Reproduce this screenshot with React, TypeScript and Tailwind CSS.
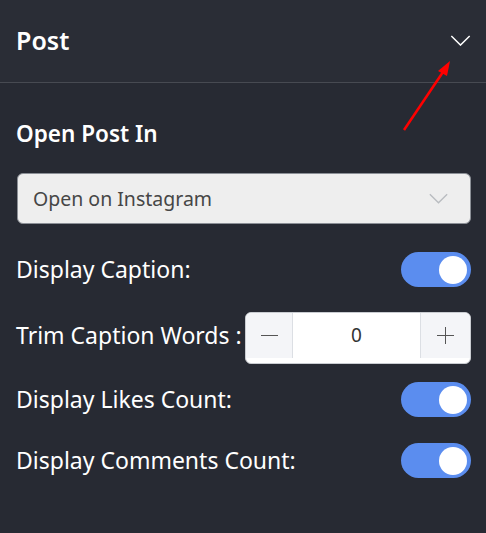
import { useState } from 'react';

function Toggle({ on, onChange }: { on: boolean; onChange: () => void }) {
  return (
    <button
      onClick={onChange}
      className={`flex h-[35px] w-[70px] shrink-0 items-center rounded-full px-[4px] ${
        on ? 'justify-end bg-[#5b8def]' : 'justify-start bg-[#9ca3af]'
      }`}
    >
      <span className="h-[28px] w-[28px] rounded-full bg-white" />
    </button>
  );
}

function Chevron({ className, color }: { className?: string; color: string }) {
  return (
    <svg className={className} viewBox="0 0 22 12" fill="none">
      <path d="M1 1l10 10L21 1" stroke={color} strokeWidth="1.6" />
    </svg>
  );
}

export default function App() {
  const [caption, setCaption] = useState(true);
  const [likes, setLikes] = useState(true);
  const [comments, setComments] = useState(true);
  const [words, setWords] = useState(0);

  return (
    <div
      className="relative h-[533px] w-[486px] bg-[#272a33] text-white"
      style={{ fontFamily: '"Noto Sans", "Open Sans", sans-serif' }}
    >
      <div className="flex h-[83px] items-center justify-between border-b border-[#474a52] bg-[#2a2d36] pl-4 pr-[15px]">
        <span className="text-[25px] font-semibold">Post</span>
        <Chevron className="mb-[2px] h-[11px] w-[21px]" color="#ffffff" />
      </div>

      <div className="pl-4 pr-[15px] pt-[37px]">
        <h3 className="text-[22.5px] font-semibold leading-[28px]">Open Post In</h3>

        <div className="mt-[25px] ml-px flex h-[51px] items-center justify-between rounded-[6px] border border-[#8b8f96] bg-[#eeeeee] pl-[15px] pr-[22px]">
          <span className="text-[19.5px] text-[#464646]">Open on Instagram</span>
          <Chevron className="h-[11px] w-[19px]" color="#b9bcc0" />
        </div>

        <div className="mt-[28px] flex items-center justify-between">
          <span className="text-[23px]">Display Caption:</span>
          <Toggle on={caption} onChange={() => setCaption(!caption)} />
        </div>

        <div className="mt-[25px] flex items-center justify-between">
          <span className="-mt-[5px] text-[23px]">Trim Caption Words :</span>
          <div className="h-[52px] w-[226px] rounded-[6px] border border-[#c9ccd1] bg-white pb-[5px]">
            <div className="flex h-full">
              <button
                onClick={() => setWords(Math.max(0, words - 1))}
                className="flex w-[47px] items-center justify-center rounded-tl-[5px] border-r border-[#dcdfe4] bg-[#f4f5f8]"
              >
                <span className="h-px w-[17px] bg-[#555]" />
              </button>
              <div className="flex flex-1 items-center justify-center text-[19px] text-[#333]">{words}</div>
              <button
                onClick={() => setWords(words + 1)}
                className="relative flex w-[50px] items-center justify-center rounded-tr-[5px] border-l border-[#dcdfe4] bg-[#f4f5f8]"
              >
                <span className="absolute h-px w-[17px] bg-[#555]" />
                <span className="absolute h-[17px] w-px bg-[#555]" />
              </button>
            </div>
          </div>
        </div>

        <div className="mt-[18px] flex items-center justify-between">
          <span className="text-[23px]">Display Likes Count:</span>
          <Toggle on={likes} onChange={() => setLikes(!likes)} />
        </div>

        <div className="mt-[26px] flex items-center justify-between">
          <span className="text-[23px]">Display Comments Count:</span>
          <Toggle on={comments} onChange={() => setComments(!comments)} />
        </div>
      </div>

      {/* annotation arrow */}
      <svg className="pointer-events-none absolute left-0 top-0" width="486" height="533">
        <line x1="404" y1="130" x2="443" y2="72" stroke="#ff0000" strokeWidth="2.5" />
        <polygon points="450,61 438,71 447,76" fill="#ff0000" />
      </svg>
    </div>
  );
}
